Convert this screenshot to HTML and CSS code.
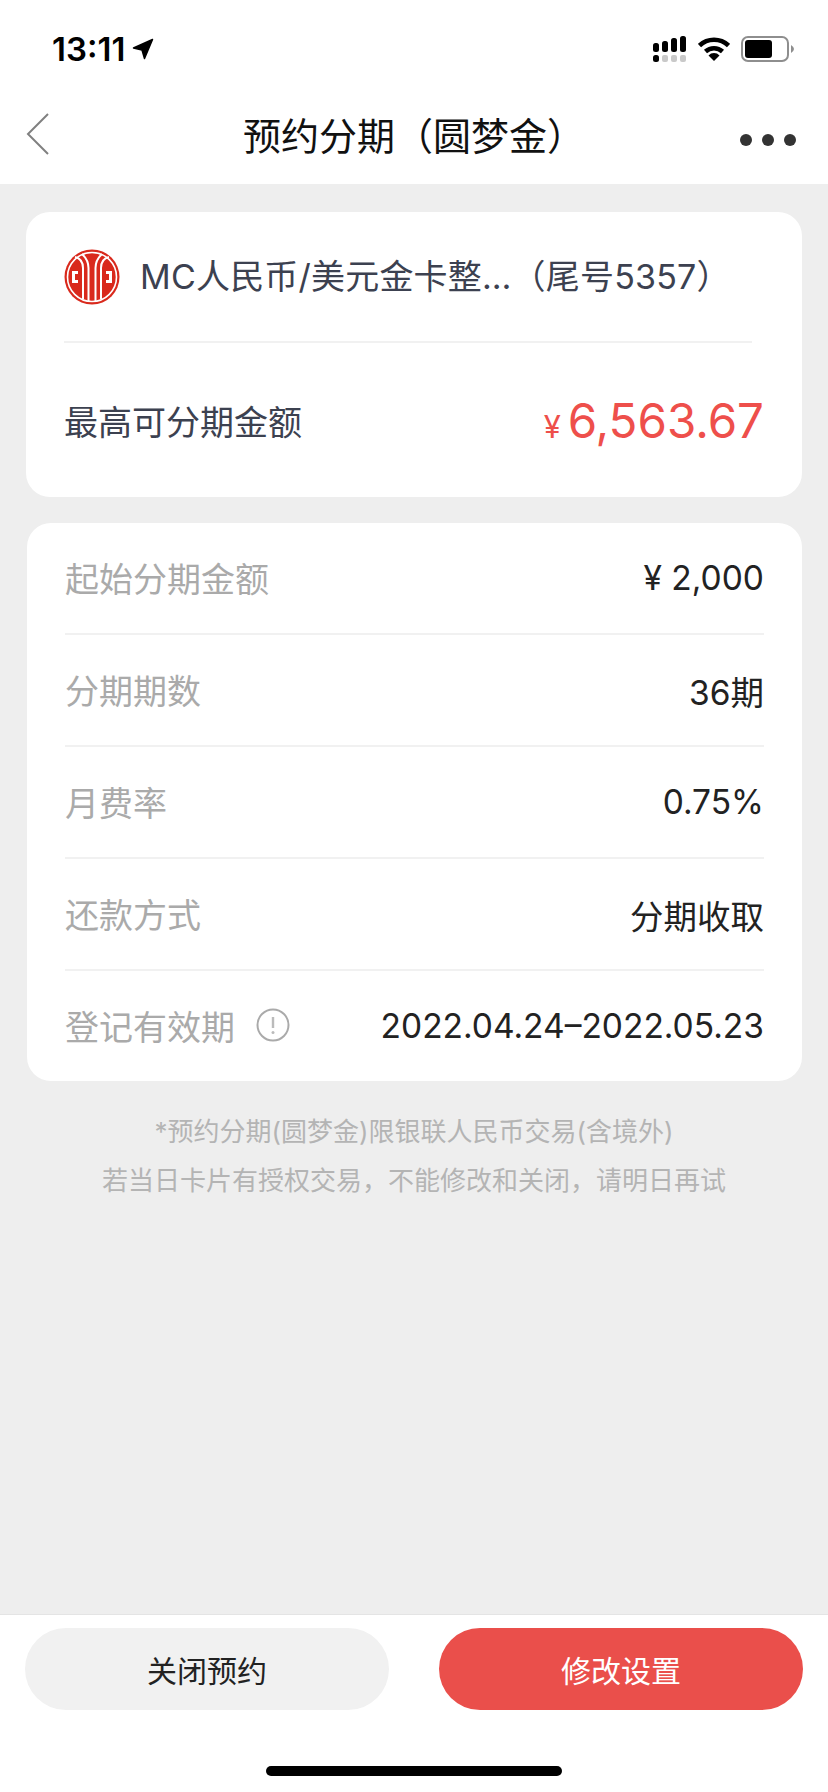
FILE: index.html
```html
<!DOCTYPE html>
<html lang="zh-CN">
<head>
    <meta charset="UTF-8">
    <title>预约分期（圆梦金）</title>
    <link rel="stylesheet" href="styles.css">
</head>
<body>
    <div class="status-bar">
        <div class="status-time">
            <span>13:11</span>
            <svg class="status-arrow" width="22" height="22" viewBox="0 0 22 22"><path d="M20.5 1.5 L1.5 10 L10 12 L12.5 20.5 Z" fill="#000" stroke="#000" stroke-width="1.5" stroke-linejoin="round"/></svg>
        </div>
        <div class="status-icons">
            <svg width="34" height="26" viewBox="0 0 34 26">
                <g fill="#000">
                    <rect x="0" y="7" width="6" height="9" rx="2.5"/>
                    <rect x="9" y="5" width="6" height="11" rx="2.5"/>
                    <rect x="18" y="2" width="6" height="14" rx="2.5"/>
                    <rect x="27" y="0" width="6" height="16" rx="2.5"/>
                    <rect x="0" y="19" width="6" height="7" rx="2.5"/>
                </g>
                <g fill="#c9c9c9">
                    <rect x="9" y="19" width="6" height="7" rx="2"/>
                    <rect x="18" y="19" width="6" height="7" rx="2"/>
                    <rect x="27" y="19" width="6" height="7" rx="2"/>
                </g>
            </svg>
            <svg width="32" height="24" viewBox="0 0 32 24">
                <path d="M1.5 8.5 A21 21 0 0 1 30.5 8.5" fill="none" stroke="#000" stroke-width="4.5"/>
                <path d="M7.5 14.5 A12.5 12.5 0 0 1 24.5 14.5" fill="none" stroke="#000" stroke-width="4.5"/>
                <path d="M16 24 L10.5 18.5 A7.5 7.5 0 0 1 21.5 18.5 Z" fill="#000"/>
            </svg>
            <svg width="54" height="26" viewBox="0 0 54 26">
                <rect x="1" y="1" width="46" height="24" rx="6" fill="none" stroke="#8e8e8e" stroke-width="2"/>
                <rect x="4" y="4" width="27" height="18" rx="3" fill="#000"/>
                <path d="M50 9 Q53 11 53 13 Q53 15 50 17 Z" fill="#8e8e8e"/>
            </svg>
        </div>
    </div>

    <header class="nav-bar">
        <svg class="nav-back" width="24" height="42" viewBox="0 0 24 42"><path d="M22 1 L2 21 L22 41" fill="none" stroke="#808080" stroke-width="2"/></svg>
        <h1 class="nav-title">预约分期（圆梦金）</h1>
        <div class="nav-more"><i></i><i></i><i></i></div>
    </header>

    <main class="page">
        <section class="card card-top">
            <div class="bank-row">
                <svg class="bank-logo" width="56" height="56" viewBox="0 0 56 56">
                    <circle cx="28" cy="28" r="27.5" fill="#d9291c"/>
                    <circle cx="28" cy="28" r="24.5" fill="none" stroke="#fff" stroke-width="1.6"/>
                    <g fill="none" stroke="#fff" stroke-width="2">
                        <path d="M19 50 V19 Q19 10 11 8"/>
                        <path d="M37 50 V19 Q37 10 45 8"/>
                        <path d="M24.5 53 V19 Q24.5 11 18 5"/>
                        <path d="M31.5 53 V19 Q31.5 11 38 5"/>
                    </g>
                    <path d="M8 22 H14 V25 H11 V31 H14 V34 H8 Z" fill="#fff"/>
                    <path d="M48 22 H42 V25 H45 V31 H42 V34 H48 Z" fill="#fff"/>
                </svg>
                <span class="bank-name">MC人民币/美元金卡整…（尾号5357）</span>
            </div>
            <div class="limit-row">
                <span class="limit-label">最高可分期金额</span>
                <span class="limit-amount"><small>¥</small>6,563.67</span>
            </div>
        </section>

        <section class="card card-detail">
            <div class="detail-row">
                <span class="detail-label">起始分期金额</span>
                <span class="detail-value">¥ 2,000</span>
            </div>
            <div class="detail-row">
                <span class="detail-label">分期期数</span>
                <span class="detail-value">36期</span>
            </div>
            <div class="detail-row">
                <span class="detail-label">月费率</span>
                <span class="detail-value">0.75%</span>
            </div>
            <div class="detail-row">
                <span class="detail-label">还款方式</span>
                <span class="detail-value">分期收取</span>
            </div>
            <div class="detail-row">
                <span class="detail-label">登记有效期
                    <svg class="info-icon" width="34" height="34" viewBox="0 0 34 34">
                        <circle cx="17" cy="17" r="15.5" fill="none" stroke="#aaa" stroke-width="2"/>
                        <path d="M17 9 V20" stroke="#bbb" stroke-width="2.4"/>
                        <circle cx="17" cy="24.5" r="1.5" fill="#bbb"/>
                    </svg>
                </span>
                <span class="detail-value">2022.04.24–2022.05.23</span>
            </div>
        </section>

        <div class="notes">
            <p>*预约分期(圆梦金)限银联人民币交易(含境外)</p>
            <p>若当日卡片有授权交易，不能修改和关闭，请明日再试</p>
        </div>
    </main>

    <footer class="bottom-bar">
        <div class="buttons">
            <button class="btn btn-close">关闭预约</button>
            <button class="btn btn-edit">修改设置</button>
        </div>
        <div class="home-indicator"></div>
    </footer>
</body>
</html>
```

FILE: styles.css
```css
* {
    box-sizing: border-box;
}
html, body {
    height: 100%;
}
body {
    margin: 0;
    display: flex;
    flex-direction: column;
    background: #eeeeee;
    color: #222;
    font-family: Inter, "Noto Sans CJK SC", sans-serif;
}
.status-bar {
    height: 84px;
    background: #fff;
    display: flex;
    justify-content: space-between;
    align-items: center;
    padding: 14px 33px 0 52px;
}
.status-time {
    display: flex;
    align-items: center;
    gap: 7px;
    font-size: 33px;
    font-weight: 600;
    color: #000;
}
.status-icons {
    display: flex;
    align-items: center;
    gap: 11px;
}
.nav-bar {
    height: 100px;
    background: #fff;
    display: flex;
    align-items: center;
    justify-content: center;
    position: relative;
}
.nav-back {
    position: absolute;
    left: 26px;
    top: 29px;
}
.nav-title {
    margin: 0;
    padding-bottom: 2px;
    font-size: 38px;
    font-weight: 400;
    color: #111;
}
.nav-more {
    position: absolute;
    right: 32px;
    top: 50px;
    display: flex;
    gap: 10px;
}
.nav-more i {
    width: 12px;
    height: 12px;
    border-radius: 50%;
    background: #333;
}
.page {
    flex-grow: 1;
    padding: 28px 26px 0;
}
.card {
    background: #fff;
    border-radius: 24px;
}
.card-top {
    height: 285px;
    padding: 0 38px;
}
.bank-row {
    height: 131px;
    display: flex;
    align-items: center;
    gap: 20px;
    margin-right: 12px;
    border-bottom: 2px solid #f1f1f1;
    font-size: 34px;
    color: #3c4150;
}
.bank-logo {
    flex-shrink: 0;
}
.bank-name {
    padding-bottom: 5px;
    letter-spacing: 0.2px;
}
.limit-row {
    height: 154px;
    display: flex;
    align-items: center;
    justify-content: space-between;
}
.limit-label {
    font-size: 34px;
    color: #3c4150;
}
.limit-amount {
    font-size: 47.5px;
    color: #ee4f4b;
}
.limit-amount small {
    font-size: 31px;
    margin-right: 7px;
}
.card-detail {
    height: 558px;
    margin: 26px 0 0 1px;
    padding: 0 38px;
}
.detail-row {
    height: 112px;
    display: flex;
    align-items: center;
    justify-content: space-between;
    border-bottom: 2px solid #f1f1f1;
}
.detail-row:last-child {
    height: 110px;
    border-bottom: none;
}
.detail-label {
    display: flex;
    align-items: center;
    gap: 21px;
    padding-bottom: 2px;
    font-size: 34px;
    color: #aaa;
}
.detail-value {
    font-size: 33.5px;
    color: #222;
}
.notes {
    margin-top: 26px;
    text-align: center;
    font-size: 26px;
    line-height: 49px;
    color: #b4b4b4;
}
.notes p {
    margin: 0;
}
.bottom-bar {
    height: 178px;
    background: #fff;
    border-top: 1px solid #e4e4e4;
    padding-top: 13px;
}
.buttons {
    display: flex;
    justify-content: space-between;
    padding: 0 25px;
}
.btn {
    width: 364px;
    height: 82px;
    border: none;
    border-radius: 41px;
    font-family: inherit;
    font-size: 30px;
}
.btn-close {
    background: #f1f1f1;
    color: #222;
}
.btn-edit {
    background: #ea4f4b;
    color: #fff;
}
.home-indicator {
    width: 296px;
    height: 10px;
    margin: 56px auto 0;
    border-radius: 5px;
    background: #000;
}
```
